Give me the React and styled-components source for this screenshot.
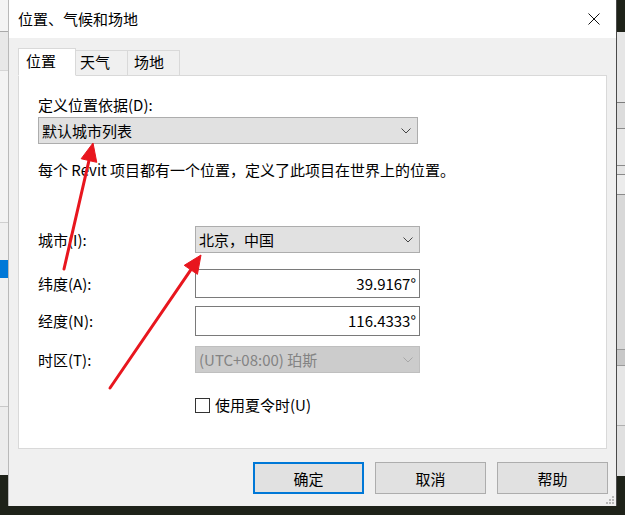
import React from "react";
import styled, { createGlobalStyle } from "styled-components";

const GlobalStyle = createGlobalStyle`
  html, body {
    margin: 0;
    padding: 0;
    background: #1e2219;
  }
  body {
    font-family: "Noto Sans CJK SC", "Noto Sans", "Liberation Sans", sans-serif;
    font-size: 15px;
    color: #000;
  }
`;

const Screen = styled.div`
  position: relative;
  width: 625px;
  height: 515px;
  overflow: hidden;
  background: #1e2219;
  display: grid;
  grid-template-columns: 8px 609px 8px;
  align-items: start;
`;

const Strip = styled.div`
  display: flex;
  flex-direction: column;
  height: 473px;
  background: ${(p) => p.$bg};
`;

const Seg = styled.div`
  flex: 0 0 ${(p) => p.$h}px;
  background: ${(p) => p.$bg || "transparent"};
  border-bottom: ${(p) => (p.$line ? `1px solid ${p.$line}` : "none")};
`;

const Dialog = styled.div`
  position: relative;
  height: 506px;
  background: #f0f0f0;
  border-left: 1px solid #b9b9b9;
  border-right: 1px solid #4a4a4a;
  display: flex;
  flex-direction: column;
`;

const TitleBar = styled.div`
  height: 38px;
  background: #fff;
  display: flex;
  align-items: center;
  justify-content: space-between;
  padding-left: 9px;
`;

const Title = styled.span`
  font-size: 15px;
  line-height: 20px;
  margin-top: 0;
`;

const CloseButton = styled.div`
  width: 44px;
  height: 38px;
  display: flex;
  align-items: center;
  justify-content: center;
`;

const Body = styled.div`
  padding: 11px 9px 0 9px;
  display: flex;
  flex-direction: column;
`;

const TabStrip = styled.div`
  display: flex;
  align-items: flex-end;
  height: 27px;
  position: relative;
  z-index: 1;
  margin-bottom: -1px;
`;

const Tab = styled.div`
  box-sizing: border-box;
  width: ${(p) => p.$w}px;
  height: ${(p) => (p.$active ? 28 : 26)}px;
  padding-left: ${(p) => p.$pl}px;
  background: ${(p) => (p.$active ? "#fff" : "#f0f0f0")};
  border: 1px solid #d9d9d9;
  border-bottom: ${(p) => (p.$active ? "1px solid #fff" : "1px solid #d9d9d9")};
  border-left: ${(p) => (p.$first ? "1px solid #d9d9d9" : "none")};
  font-size: 15px;
  line-height: ${(p) => (p.$active ? 24 : 22)}px;
`;

const Panel = styled.div`
  box-sizing: border-box;
  height: 374px;
  background: #fff;
  border: 1px solid #d9d9d9;
  padding-left: 19px;
  display: flex;
  flex-direction: column;
`;

const Label = styled.div`
  font-size: 15px;
  line-height: 20px;
  margin-top: ${(p) => p.$mt || 0}px;
`;

const SelectBox = styled.div`
  box-sizing: border-box;
  position: relative;
  width: ${(p) => p.$w}px;
  height: 27px;
  margin-top: ${(p) => p.$mt || 0}px;
  background: ${(p) => (p.$disabled ? "#cccccc" : "#e1e1e1")};
  border: 1px solid ${(p) => (p.$disabled ? "#bfbfbf" : "#adadad")};
  color: ${(p) => (p.$disabled ? "#838383" : "#000")};
  padding-left: 3px;
  font-size: 15px;
  line-height: 24px;
  display: flex;
  align-items: center;
  justify-content: space-between;
`;

const Chevron = styled.svg`
  margin-right: 6px;
  flex: none;
`;

const FormRow = styled.div`
  display: grid;
  grid-template-columns: 157px 225px;
  align-items: center;
  margin-top: ${(p) => p.$mt}px;
  height: ${(p) => p.$h}px;
`;

const TextInput = styled.div`
  box-sizing: border-box;
  height: ${(p) => p.$h}px;
  background: #fff;
  border: 1px solid #7a7a7a;
  padding-right: 3px;
  text-align: right;
  font-size: 15px;
  line-height: ${(p) => p.$h - 2}px;
`;

const CheckRow = styled.label`
  display: flex;
  align-items: center;
  gap: 5px;
  font-size: 15px;
  line-height: 20px;
`;

const CheckBox = styled.span`
  box-sizing: border-box;
  width: 15px;
  height: 15px;
  border: 1px solid #333;
  background: #fff;
`;

const ButtonRow = styled.div`
  display: flex;
  justify-content: flex-end;
  gap: 11px;
  margin-top: 13px;
  margin-right: -1px;
`;

const Button = styled.div`
  box-sizing: border-box;
  width: 111px;
  height: 32px;
  background: #e1e1e1;
  border: ${(p) => (p.$primary ? "2px solid #0078d7" : "1px solid #adadad")};
  display: flex;
  align-items: center;
  justify-content: center;
  font-size: 15px;
`;

const Grip = styled.svg`
  position: absolute;
  right: 1px;
  bottom: 1px;
`;

const Overlay = styled.svg`
  position: absolute;
  left: 0;
  top: 0;
  pointer-events: none;
`;

function ChevronDown({ color }) {
  return (
    <Chevron width="10" height="6" viewBox="0 0 10 6">
      <path d="M0.5 0.5 L5 5 L9.5 0.5" fill="none" stroke={color} strokeWidth="1" />
    </Chevron>
  );
}

function Select({ value, w, mt, disabled }) {
  return (
    <SelectBox $w={w} $mt={mt} $disabled={disabled}>
      <span>{value}</span>
      <ChevronDown color={disabled ? "#a8a8a8" : "#444"} />
    </SelectBox>
  );
}

function Arrow({ x1, y1, x2, y2 }) {
  const dx = x2 - x1;
  const dy = y2 - y1;
  const len = Math.hypot(dx, dy);
  const ux = dx / len;
  const uy = dy / len;
  const hl = 18;
  const hw = 8;
  const bx = x2 - ux * hl;
  const by = y2 - uy * hl;
  const pts = `${x2},${y2} ${bx - uy * hw},${by + ux * hw} ${bx + uy * hw},${by - ux * hw}`;
  return (
    <g fill="#e8161e" stroke="#e8161e">
      <line x1={x1} y1={y1} x2={bx + ux * 2} y2={by + uy * 2} strokeWidth="3" strokeLinecap="round" />
      <polygon points={pts} strokeWidth="1" />
    </g>
  );
}

export default function App() {
  return (
    <>
      <GlobalStyle />
      <Screen>
        <Strip $bg="#efefef">
          <Seg $h={31} $bg="#f4f4f4" $line="#a9a9a9" />
          <Seg $h={38} $bg="#e8e8e8" $line="#d5d5d5" />
          <Seg $h={151} $bg="#f3f3f3" $line="#cfcfcf" />
          <Seg $h={37} $bg="#f0f0f0" />
          <Seg $h={18} $bg="#0078d7" />
          <Seg $h={128} $bg="#f0f0f0" $line="#c8c8c8" />
          <Seg $h={68} $bg="#ececec" />
        </Strip>
        <Dialog>
          <TitleBar>
            <Title>位置、气候和场地</Title>
            <CloseButton>
              <svg width="12" height="12" viewBox="0 0 12 12">
                <path d="M0.5 0.5 L11.5 11.5 M11.5 0.5 L0.5 11.5" stroke="#111" strokeWidth="1" />
              </svg>
            </CloseButton>
          </TitleBar>
          <Body>
            <TabStrip>
              <Tab $active $first $w={58} $pl={7}>位置</Tab>
              <Tab $w={52} $pl={4}>天气</Tab>
              <Tab $w={52} $pl={6}>场地</Tab>
            </TabStrip>
            <Panel>
              <Label $mt={19}>定义位置依据(D):</Label>
              <Select value="默认城市列表" w={380} mt={2} />
              <Label $mt={16}>每个 Revit 项目都有一个位置，定义了此项目在世界上的位置。</Label>
              <FormRow $mt={46} $h={27}>
                <Label>城市(I):</Label>
                <Select value="北京，中国" w={225} />
              </FormRow>
              <FormRow $mt={16} $h={29}>
                <Label>纬度(A):</Label>
                <TextInput $h={29}>39.9167°</TextInput>
              </FormRow>
              <FormRow $mt={8} $h={30}>
                <Label>经度(N):</Label>
                <TextInput $h={30}>116.4333°</TextInput>
              </FormRow>
              <FormRow $mt={10} $h={27}>
                <Label>时区(T):</Label>
                <Select value="(UTC+08:00) 珀斯" w={225} disabled />
              </FormRow>
              <FormRow $mt={22} $h={17}>
                <span />
                <CheckRow>
                  <CheckBox />
                  使用夏令时(U)
                </CheckRow>
              </FormRow>
            </Panel>
            <ButtonRow>
              <Button $primary>确定</Button>
              <Button>取消</Button>
              <Button>帮助</Button>
            </ButtonRow>
          </Body>
          <Grip width="10" height="10" viewBox="0 0 10 10">
            <g fill="#b8b8b8">
              <rect x="7" y="1" width="2" height="2" />
              <rect x="4" y="4" width="2" height="2" />
              <rect x="7" y="4" width="2" height="2" />
              <rect x="1" y="7" width="2" height="2" />
              <rect x="4" y="7" width="2" height="2" />
              <rect x="7" y="7" width="2" height="2" />
            </g>
          </Grip>
        </Dialog>
        <Strip $bg="#e2e2e2">
          <Seg $h={32} $bg="#1e2219" />
          <Seg $h={70} $bg="#e6e6e6" $line="#7d7d7d" />
          <Seg $h={25} $bg="#dcdcdc" $line="#8a8a8a" />
          <Seg $h={36} $bg="#e8e8e8" $line="#8a8a8a" />
          <Seg $h={8} $bg="#e4e4e4" $line="#8a8a8a" />
          <Seg $h={19} $bg="#ececec" $line="#8a8a8a" />
          <Seg $h={154} $bg="#d8d8d8" $line="#9a9a9a" />
          <Seg $h={15} $bg="#c8c8c8" $line="#9a9a9a" />
          <Seg $h={59} $bg="#e6e6e6" $line="#b0b0b0" />
          <Seg $h={50} $bg="#e0e0e0" />
        </Strip>
        <Overlay width="625" height="515" viewBox="0 0 625 515">
          <Arrow x1={64} y1={269} x2={93} y2={143} />
          <Arrow x1={110} y1={388} x2={201} y2={255} />
        </Overlay>
      </Screen>
    </>
  );
}
